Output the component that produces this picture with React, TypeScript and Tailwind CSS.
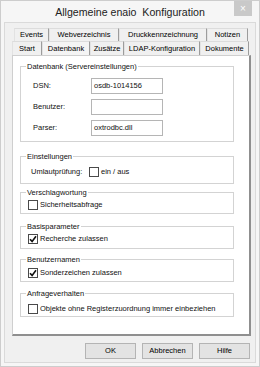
import React from "react";

const font = { fontFamily: '"Liberation Sans", Arial, sans-serif' };

function Tab({ label, w, selected }: { label: string; w: string; selected?: boolean }) {
  return (
    <div
      className={`${w} h-full flex items-center justify-center border-t border-l border-t-[#dcdcdc] border-l-[#e2e2e2] border-r border-r-[#9c9c9c] ${selected ? "bg-[#f4f4f4]" : ""} text-[7.5px] leading-none text-black whitespace-nowrap`}
    >
      {label}
    </div>
  );
}

function Check({ checked }: { checked?: boolean }) {
  return (
    <div className="w-[10px] h-[10px] border border-[#4a4a4a] bg-white flex items-center justify-center shrink-0">
      {checked && (
        <svg width="8" height="8" viewBox="0 0 8 8">
          <path d="M1 4.2 L3.1 6.4 L7 1.2" fill="none" stroke="#111" strokeWidth="1.6" />
        </svg>
      )}
    </div>
  );
}

function Group({ title, h, mt, children }: { title: string; h: string; mt: string; children?: React.ReactNode }) {
  return (
    <div className={`relative w-[214px] ${h} ${mt} border border-[#d3d3d3] shrink-0`}>
      <span className="absolute left-[5px] -top-[5px] bg-white px-[1px] text-[7.5px] leading-[9px] text-[#111]">
        {title}
      </span>
      {children}
    </div>
  );
}

function Field({ label, value }: { label: string; value: string }) {
  return (
    <div className="flex items-center h-[16px]">
      <span className="w-[70px] pl-[12px] text-[7.5px] text-[#111] shrink-0">{label}</span>
      <div className="w-[72px] h-[16px] border border-[#b5b5b5] bg-white flex items-center pl-[2px] text-[7.5px] text-[#111]">
        {value}
      </div>
    </div>
  );
}

function Btn({ label }: { label: string }) {
  return (
    <div className="w-[51px] h-[16px] border border-[#b4b4b4] bg-[#e3e3e3] flex items-center justify-center text-[7.5px] text-black">
      {label}
    </div>
  );
}

export default function App() {
  return (
    <div style={font} className="w-[260px] h-[367px] border border-[#cdcdcd] bg-[#f6f6f6] flex flex-col">
      <div className="relative h-[21px] shrink-0 flex items-center justify-center">
        <span className="text-[10.6px] text-[#222] whitespace-pre pt-[2px]">Allgemeine enaio  Konfiguration</span>
        <div className="absolute right-[7px] top-0 w-[18px] h-[15px] bg-[#c9c9c9] flex items-center justify-center text-white text-[10px] leading-none">
          ×
        </div>
      </div>
      <div className="flex-1 mx-[3px] mb-[3px] border border-[#dadada] bg-[#f0f0f0] flex flex-col pl-[7px] pr-[4px]">
        <div className="mt-[5px] h-[13px] flex ml-[2px] shrink-0">
          <Tab label="Events" w="w-[35px]" />
          <Tab label="Webverzeichnis" w="w-[70px]" />
          <Tab label="Druckkennzeichnung" w="w-[88px]" />
          <Tab label="Notizen" w="w-[41px]" />
        </div>
        <div className="h-[14px] flex shrink-0">
          <Tab label="Start" w="w-[30px]" />
          <Tab label="Datenbank" w="w-[48px]" selected />
          <Tab label="Zusätze" w="w-[34px]" />
          <Tab label="LDAP-Konfiguration" w="w-[76px]" />
          <Tab label="Dokumente" w="w-[49px]" />
        </div>
        <div className="h-[281px] bg-white border-t border-l border-[#cfcfcf] border-r-2 border-b-2 border-r-[#8f8f8f] border-b-[#8f8f8f] flex flex-col pl-[7px] shrink-0">
          <Group title="Datenbank (Servereinstellungen)" h="h-[76px]" mt="mt-[10px]">
            <div className="flex flex-col gap-[5px] pt-[11px]">
              <Field label="DSN:" value="osdb-1014156" />
              <Field label="Benutzer:" value="" />
              <Field label="Parser:" value="oxtrodbc.dll" />
            </div>
          </Group>
          <Group title="Einstellungen" h="h-[28px]" mt="mt-[14px]">
            <div className="flex items-center pt-[9px] pl-[10px] text-[7.5px] text-[#111]">
              <span className="w-[58px]">Umlautprüfung:</span>
              <Check />
              <span className="ml-[2px]">ein / aus</span>
            </div>
          </Group>
          <Group title="Verschlagwortung" h="h-[22px]" mt="mt-[8px]">
            <div className="flex items-center pt-[6px] pl-[7px] text-[7.5px] text-[#111]">
              <Check />
              <span className="ml-[2px]">Sicherheitsabfrage</span>
            </div>
          </Group>
          <Group title="Basisparameter" h="h-[23px]" mt="mt-[12px]">
            <div className="flex items-center pt-[6px] pl-[7px] text-[7.5px] text-[#111]">
              <Check checked />
              <span className="ml-[2px]">Recherche zulassen</span>
            </div>
          </Group>
          <Group title="Benutzernamen" h="h-[23px]" mt="mt-[10px]">
            <div className="flex items-center pt-[7px] pl-[7px] text-[7.5px] text-[#111]">
              <Check checked />
              <span className="ml-[2px]">Sonderzeichen zulassen</span>
            </div>
          </Group>
          <Group title="Anfrageverhalten" h="h-[24px]" mt="mt-[11px]">
            <div className="flex items-center pt-[9px] pl-[7px] text-[7.5px] text-[#111]">
              <Check />
              <span className="ml-[2px]">Objekte ohne Registerzuordnung immer einbeziehen</span>
            </div>
          </Group>
        </div>
        <div className="mt-[7px] flex justify-end gap-[6px] pr-[1px]">
          <Btn label="OK" />
          <Btn label="Abbrechen" />
          <Btn label="Hilfe" />
        </div>
      </div>
    </div>
  );
}
